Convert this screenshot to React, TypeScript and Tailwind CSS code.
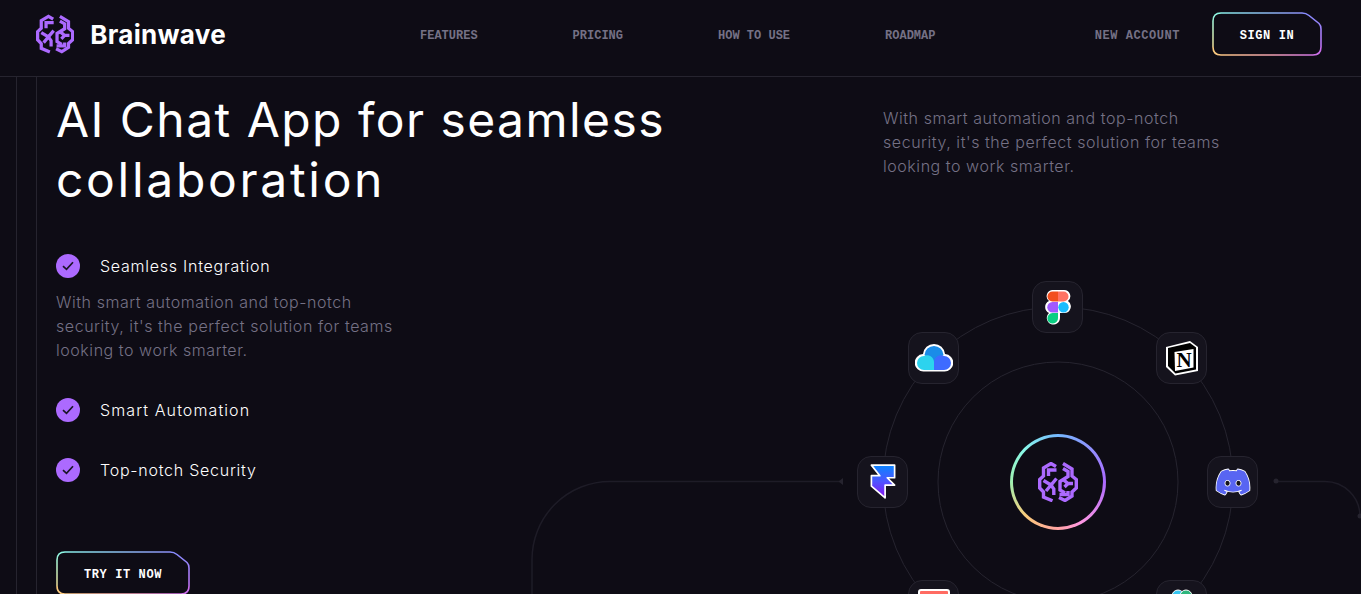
import { ReactNode } from "react";
import { FaDiscord } from "react-icons/fa";

const NAV_ITEMS = ["FEATURES", "PRICING", "HOW TO USE", "ROADMAP"];

function BrainLogo() {
  return (
    <svg width="40" height="40" viewBox="0 0 40 40" fill="none" stroke="#AC6AFF" strokeWidth="3.4">
      <path d="M18 4.5 L13 1.5 L5.5 6 V14 L1.7 17.5 V26 L5.5 30 V35 L14.5 38.8" />
      <path d="M18.5 8 H10.5 V14" />
      <path d="M5.5 18.5 L13 23 L18.5 16.5" />
      <path d="M8 29 L13 23 L15.8 27 V33" />
      <path d="M25 1.5 L34 7 V14 L38.3 17.5 V26 L34 30 V34 L27 38.5 L21 35.5" />
      <path d="M25 6.5 L30 9.5 V14.5 L22 19.5 V28 L27 31" />
      <path d="M24.5 17 L30 21.5 H35" />
      <path d="M26.5 25 L30 21.5" />
      <path d="M21.5 32.5 H30 V29" />
    </svg>
  );
}

function GradientButton({ width, children }: { width: number; children: ReactNode }) {
  const h = 44;
  const w = width;
  return (
    <button className="relative flex h-[44px] items-center justify-center font-['Liberation_Mono',monospace] text-[12px] font-bold text-white" style={{ width }}>
      <svg className="absolute left-0 top-0" width={w} height={h} fill="none" strokeWidth="1.6">
        <defs>
          <linearGradient id={`top${w}`} gradientUnits="userSpaceOnUse" x1="0" x2={w - 20} y1="0" y2="0">
            <stop offset="0" stopColor="#89F9E8" />
            <stop offset="1" stopColor="#8C8FF5" />
          </linearGradient>
          <linearGradient id={`left${w}`} gradientUnits="userSpaceOnUse" x1="0" x2="0" y1="0" y2={h}>
            <stop offset="0" stopColor="#89F9E8" />
            <stop offset="1" stopColor="#FACB7B" />
          </linearGradient>
          <linearGradient id={`bottom${w}`} gradientUnits="userSpaceOnUse" x1="0" x2={w} y1="0" y2="0">
            <stop offset="0" stopColor="#FACB7B" />
            <stop offset="0.55" stopColor="#F0A0B0" />
            <stop offset="1" stopColor="#C86BEE" />
          </linearGradient>
          <linearGradient id={`right${w}`} gradientUnits="userSpaceOnUse" x1="0" x2="0" y1="0" y2={h}>
            <stop offset="0" stopColor="#858DFF" />
            <stop offset="1" stopColor="#C86BEE" />
          </linearGradient>
        </defs>
        <path d={`M9 1 H${w - 20}`} stroke={`url(#top${w})`} />
        <path d={`M1 ${h - 9} V9 Q1 1 9 1`} stroke={`url(#left${w})`} />
        <path d={`M1 ${h - 9} Q1 ${h - 1} 9 ${h - 1} H${w - 9} Q${w - 1} ${h - 1} ${w - 1} ${h - 9}`} stroke={`url(#bottom${w})`} />
        <path d={`M${w - 20} 1 Q${w - 16} 1 ${w - 13} 3.5 L${w - 3} 11.5 Q${w - 1} 13.5 ${w - 1} 17 V${h - 9}`} stroke={`url(#right${w})`} />
      </svg>
      <span className="relative pt-[3px] tracking-[0.6px]">{children}</span>
    </button>
  );
}

function Check() {
  return (
    <span className="flex h-6 w-6 shrink-0 items-center justify-center rounded-full bg-[#AC6AFF]">
      <svg width="12" height="10" viewBox="0 0 12 10" fill="none" stroke="#1B1628" strokeWidth="1.7">
        <path d="M1 5.2 4.5 8.4 11 1.2" />
      </svg>
    </span>
  );
}

function FeatureRow({ label, tracking }: { label: string; tracking: string }) {
  return (
    <div className="flex h-6 items-center gap-5">
      <Check />
      <span className={`text-[16px] font-light text-[#FEFEFE] ${tracking}`}>{label}</span>
    </div>
  );
}

function Tile({ className, children }: { className: string; children: ReactNode }) {
  return (
    <div className={`absolute flex h-[52px] w-[51px] items-center justify-center rounded-[14px] border border-[#26242F] bg-[#15131D] ${className}`}>
      {children}
    </div>
  );
}

function FigmaIcon() {
  return (
    <svg width="26" height="36" viewBox="0 0 26 36">
      <path d="M7 1 H19 a6.2 6.2 0 0 1 4 11 a6.6 6.6 0 0 1 -4 12 h-4 V29 a6.6 6.6 0 1 1 -11 -5 a6.6 6.6 0 0 1 0 -12 A6.2 6.2 0 0 1 7 1 Z" fill="#fff" />
      <path d="M7.5 2.5 H13 V12.5 H7.5 a5 5 0 0 1 0 -10 Z" fill="#F24E1E" />
      <path d="M13 2.5 H18.5 a5 5 0 0 1 0 10 H13 Z" fill="#FF7262" />
      <path d="M13 13 H7.5 a5 5 0 0 0 0 10.5 H13 Z" fill="#A259FF" />
      <circle cx="18.5" cy="18.2" r="5.2" fill="#1ABCFE" />
      <path d="M7.5 24 H13 V29 a5.3 5.3 0 1 1 -5.5 -5 Z" fill="#0ACF83" />
    </svg>
  );
}

function NotionIcon() {
  return (
    <svg width="34" height="36" viewBox="0 0 34 36">
      <path d="M1 7 L25 1 L33 7 V31 L10 35.5 L1 27 Z" fill="#fff" />
      <path d="M3 8 L25 3 L31 7.5 V29.5 L10.5 33.5 L3 26 Z" fill="#000" />
      <path d="M9.5 12 L28.5 9 V27.5 L10 31 Z" fill="#fff" />
      <text x="19" y="26.5" textAnchor="middle" fontFamily="'Liberation Serif',serif" fontWeight="700" fontSize="21" fill="#000">N</text>
    </svg>
  );
}

function CloudIcon() {
  return (
    <svg width="38" height="30" viewBox="0 0 38 30">
      <path d="M19 1 a11 11 0 0 1 11 10 a8.5 8.5 0 0 1 -1 17.5 H9 a8.5 8.5 0 0 1 -1 -17.5 a11 11 0 0 1 11 -10 Z" fill="#fff" />
      <path d="M19 3 a9.5 9.5 0 0 1 9.5 9 L19 20 L9.5 12 a9.5 9.5 0 0 1 9.5 -9 Z" fill="#1A8CE8" />
      <path d="M9 13 a7 7 0 0 1 10 6 V27 H9 a7 7 0 0 1 0 -14 Z" fill="#2CD3EE" />
      <path d="M19 19 a7 7 0 0 1 10 -6 a7 7 0 0 1 0 14 H19 Z" fill="#3E6BFF" />
    </svg>
  );
}

function FramerIcon() {
  return (
    <svg width="30" height="38" viewBox="0 0 28 36">
      <defs>
        <linearGradient id="framer" x1="0" x2="0" y1="0" y2="1">
          <stop offset="0" stopColor="#0A84FF" />
          <stop offset="0.5" stopColor="#4E55FF" />
          <stop offset="1" stopColor="#8B10F0" />
        </linearGradient>
      </defs>
      <path d="M3 2 H25 V14 H18 L25 21 H16 V33 L3 22 V12 H11 Z" fill="url(#framer)" stroke="#fff" strokeWidth="1.6" strokeLinejoin="round" />
    </svg>
  );
}

export default function App() {
  return (
    <div className="relative h-[594px] w-[1361px] overflow-hidden bg-[#0E0C15] font-['Inter',sans-serif] text-white">
      <header className="flex h-[77px] items-center border-b border-[#26242F] pb-2 pl-9 pr-[39px]">
        <div className="flex w-[190px] items-center gap-4">
          <BrainLogo />
          <span className="text-[26px] font-bold tracking-[0.3px] text-white">Brainwave</span>
        </div>
        <nav className="ml-[194px] flex gap-[95px] pt-[3px] font-['Liberation_Mono',monospace] text-[12px] font-bold text-[#757185]">
          {NAV_ITEMS.map((item) => (
            <span key={item}>{item}</span>
          ))}
        </nav>
        <div className="ml-auto flex items-center gap-8">
          <span className="pt-[3px] font-['Liberation_Mono',monospace] text-[12px] font-bold tracking-[0.55px] text-[#757185]">NEW ACCOUNT</span>
          <GradientButton width={110}>SIGN IN</GradientButton>
        </div>
      </header>

      <div className="ml-4 h-[517px] border-l border-[#26242F] pl-[19px]">
        <div className="h-full border-l border-[#26242F] pl-[19px] pt-[13px]">
          <div className="flex">
            <section className="w-[827px] shrink-0">
              <h1 className="text-[48px] font-normal leading-[60px]">
                <span className="tracking-[1.45px]">AI Chat App for seamless</span>
                <br />
                <span className="tracking-[2.7px]">collaboration</span>
              </h1>
              <div className="mt-11">
                <FeatureRow label="Seamless Integration" tracking="tracking-[0.75px]" />
                <p className="mt-3 w-[360px] text-[16px] font-light leading-6 tracking-[0.55px] text-[#757185]">
                  With smart automation and top-notch security, it's the perfect solution for teams looking to work smarter.
                </p>
              </div>
              <div className="mt-9">
                <FeatureRow label="Smart Automation" tracking="tracking-[1.1px]" />
              </div>
              <div className="mt-9">
                <FeatureRow label="Top-notch Security" tracking="tracking-[0.75px]" />
              </div>
              <div className="mt-[69px]">
                <GradientButton width={134}>TRY IT NOW</GradientButton>
              </div>
            </section>
            <p className="mt-[16px] w-[360px] text-[16px] font-light leading-6 tracking-[0.55px] text-[#757185]">
              With smart automation and top-notch security, it's the perfect solution for teams looking to work smarter.
            </p>
          </div>
        </div>
      </div>

      {/* orbit diagram */}
      <svg className="absolute left-0 top-0" width="1361" height="594" fill="none" stroke="#26242F">
        <circle cx="1058" cy="482" r="175" />
        <circle cx="1058" cy="482" r="120" />
        <path d="M532 594 V560 A78 78 0 0 1 610 481.5 H840" strokeWidth="1.5" stroke="#1E1C27" />
        <path d="M843 478 L838.5 481.5 L843 485 Z" fill="#26242F" stroke="none" />
        <path d="M1276 481.5 H1325 A35 35 0 0 1 1360 516" strokeWidth="1.5" stroke="#1E1C27" />
        <circle cx="1276" cy="481" r="2.5" fill="#26242F" stroke="none" />
        <circle cx="1360" cy="516" r="2.5" fill="#26242F" stroke="none" />
      </svg>

      <Tile className="left-[1032px] top-[281px]">
        <FigmaIcon />
      </Tile>
      <Tile className="left-[1156px] top-[332px]">
        <NotionIcon />
      </Tile>
      <Tile className="left-[908px] top-[332px]">
        <CloudIcon />
      </Tile>
      <Tile className="left-[857px] top-[456px]">
        <FramerIcon />
      </Tile>
      <Tile className="left-[1207px] top-[456px]">
        <FaDiscord className="h-[36px] w-[36px] text-[#5865F2]" stroke="#fff" strokeWidth="30" style={{ paintOrder: "stroke" }} />
      </Tile>
      <Tile className="left-[908px] top-[580px] items-start pt-[8px]">
        <div className="h-8 w-8 rounded-[3px] border-2 border-white bg-[#FF6B62]" />
      </Tile>
      <Tile className="left-[1156px] top-[580px] items-start pt-[8px]">
        <svg width="20" height="14" viewBox="0 0 20 14">
          <circle cx="6" cy="7" r="6" fill="#36C5F0" stroke="#fff" strokeWidth="1" />
          <circle cx="14" cy="7" r="6" fill="#2EB67D" stroke="#fff" strokeWidth="1" />
        </svg>
      </Tile>

      <div className="absolute left-[1010px] top-[434px] flex h-[96px] w-[96px] items-center justify-center rounded-full bg-[conic-gradient(#75B8FF,#AC6AFF_25%,#FF98E2_42%,#FFA3A3_50%,#FACB7B_62%,#A0F0B0_75%,#89F9E8_87%,#75B8FF)]">
        <div className="flex h-[90px] w-[90px] items-center justify-center rounded-full bg-[#0E0C15]">
          <BrainLogo />
        </div>
      </div>
    </div>
  );
}
